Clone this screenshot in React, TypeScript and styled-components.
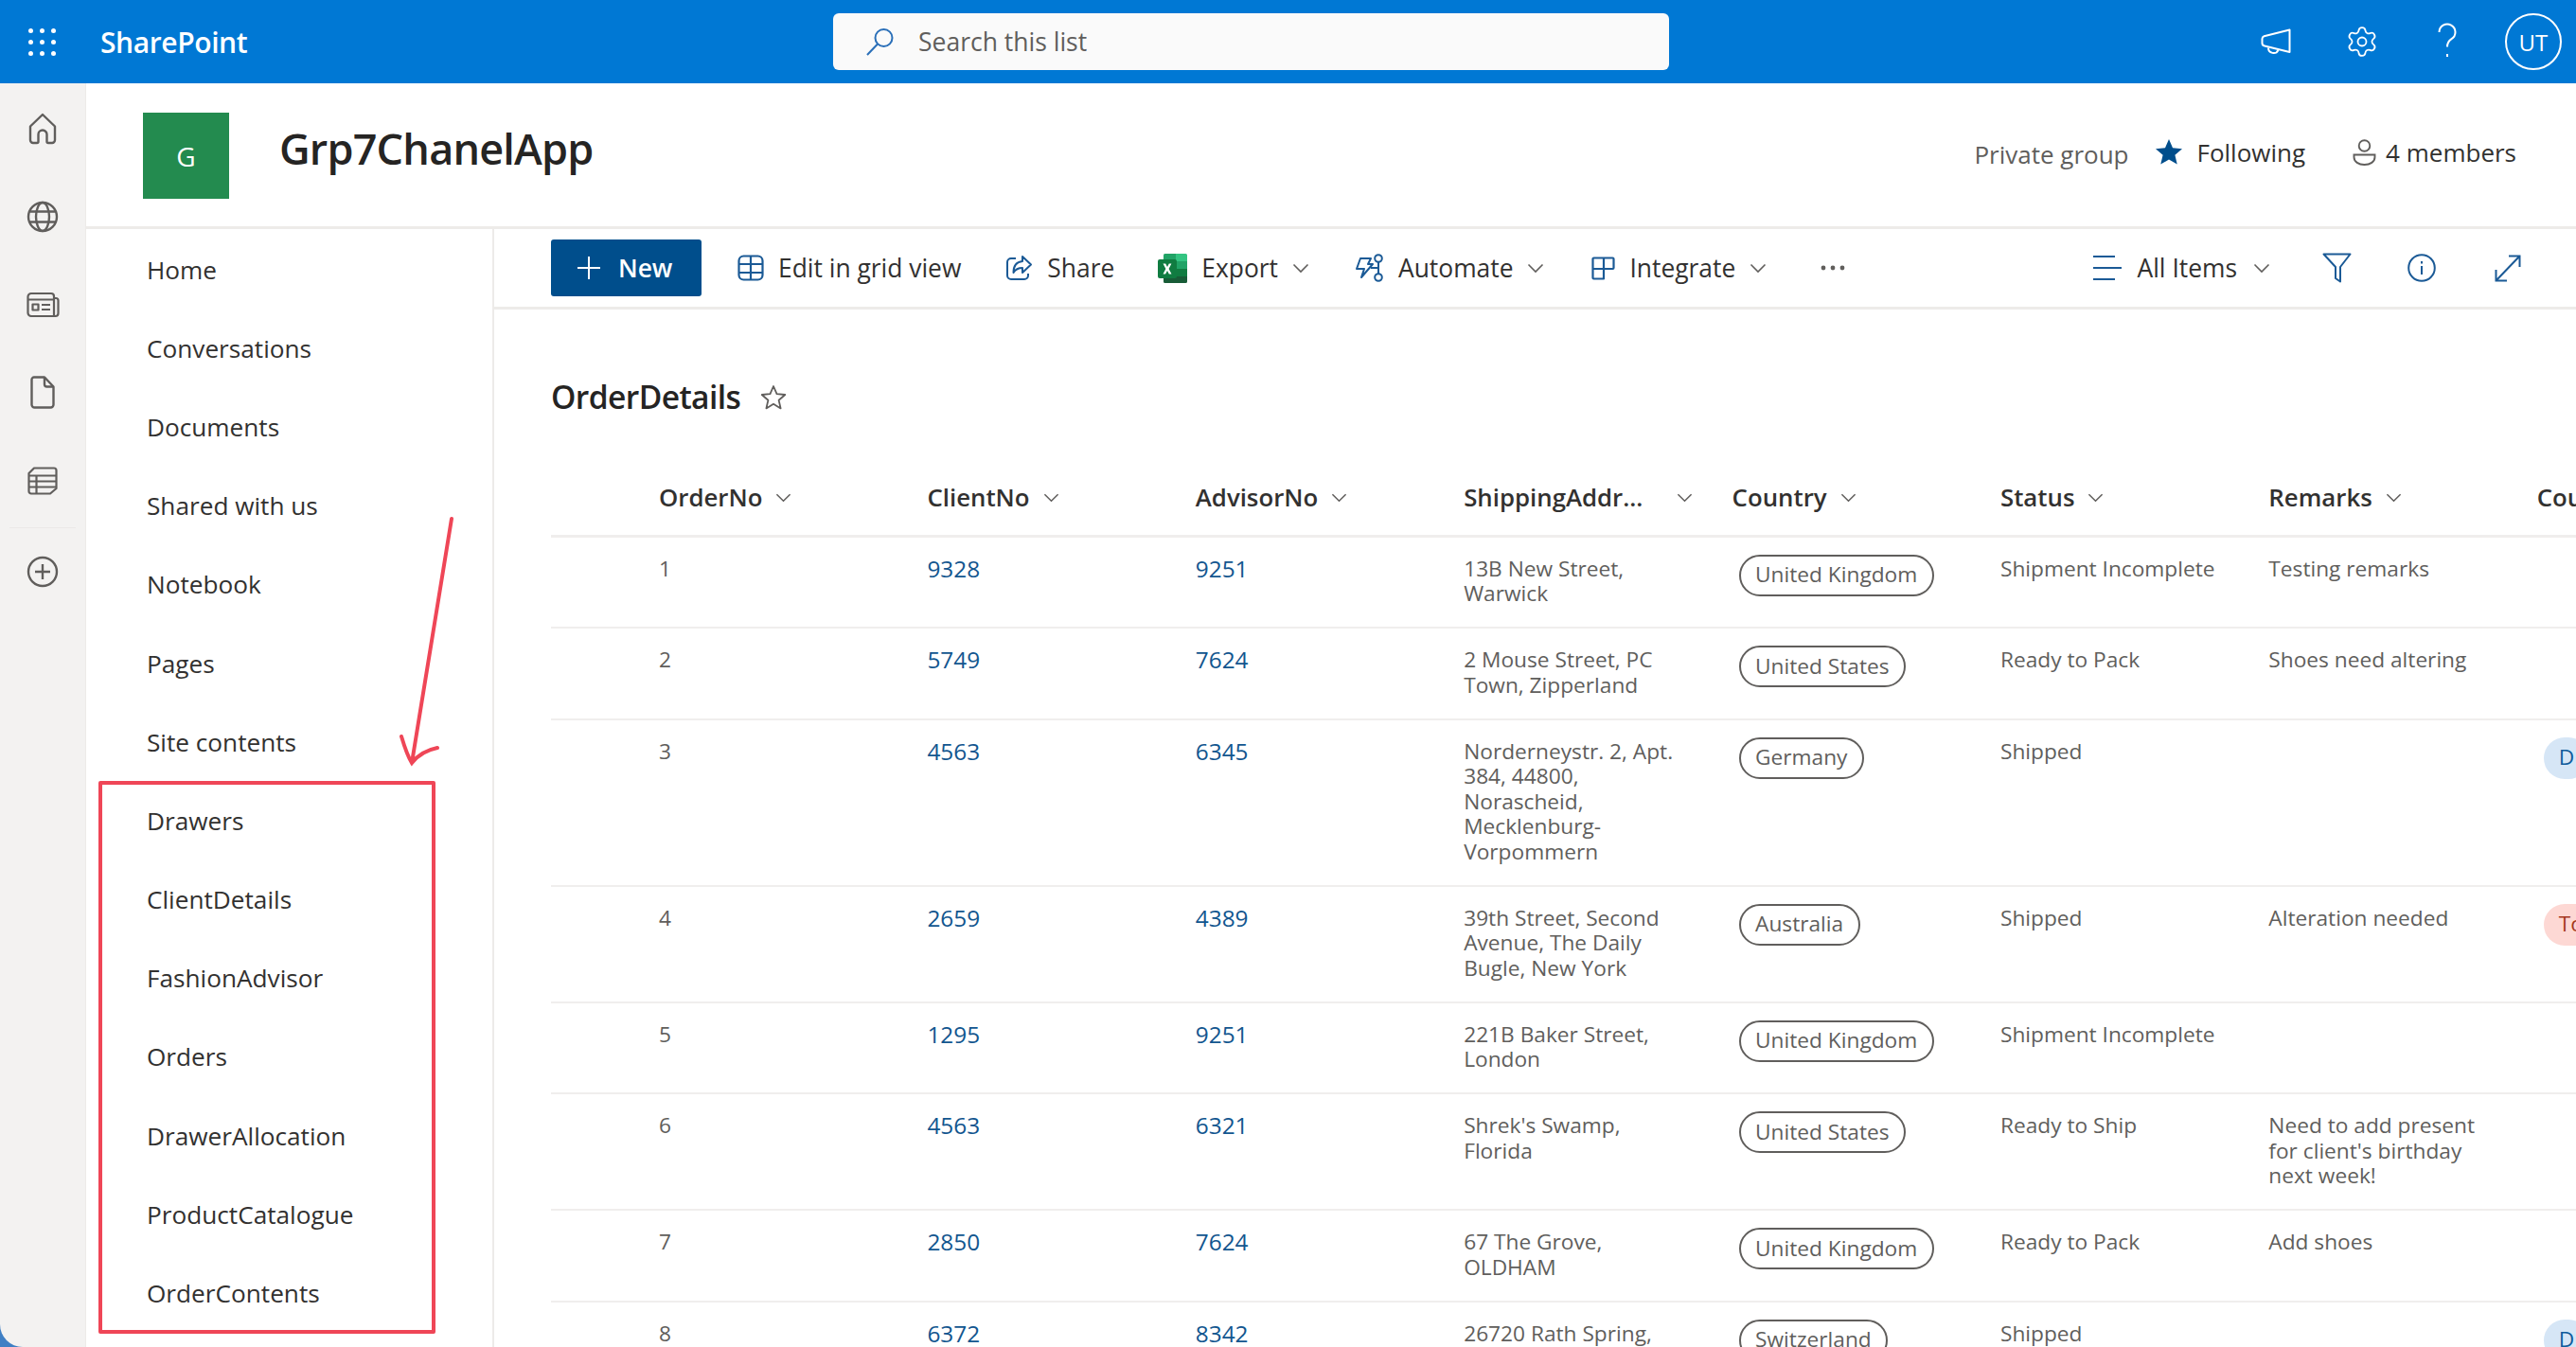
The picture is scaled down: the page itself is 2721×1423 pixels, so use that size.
import React from "react";
import styled, { createGlobalStyle } from "styled-components";
import { Settings } from "lucide-react";

const GlobalStyle = createGlobalStyle`
	html, body {
		margin: 0;
		padding: 0;
		background: #fff;
	}
	body {
		font-family: "Open Sans", "Noto Sans", "Liberation Sans", sans-serif;
		color: #323130;
	}
	* {
		box-sizing: border-box;
	}
`;

const Page = styled.div`
	position: relative;
	width: 2721px;
	height: 1423px;
	overflow: hidden;
	background: #3f7fc4;
`;

const TopBar = styled.header`
	display: flex;
	align-items: center;
	height: 88px;
	background: #0078d4;
	color: #fff;
`;

const Brand = styled.div`
	display: flex;
	align-items: center;
	width: 880px;
`;

const Waffle = styled.div`
	display: grid;
	grid-template-columns: repeat(3, 5px);
	gap: 7px;
	width: 41px;
	margin: 0 35px 0 30px;
	span {
		width: 5px;
		height: 5px;
		border-radius: 50%;
		background: #fff;
	}
`;

const BrandName = styled.span`
	font-size: 30px;
	font-weight: 600;
	letter-spacing: -0.4px;
`;

const SearchBox = styled.div`
	display: flex;
	align-items: center;
	gap: 24px;
	width: 883px;
	height: 60px;
	padding-left: 34px;
	border-radius: 6px;
	background: #fafafa;
	color: #605e5c;
	font-size: 26.5px;
`;

const HeadActions = styled.div`
	display: flex;
	margin-left: auto;
`;

const HeadAction = styled.div`
	display: flex;
	align-items: center;
	justify-content: center;
	width: 90.5px;
	height: 88px;
`;

const Avatar = styled.div`
	display: flex;
	align-items: center;
	justify-content: center;
	width: 60px;
	height: 60px;
	border: 2px solid #fff;
	border-radius: 50%;
	font-size: 24px;
`;

const Body = styled.div`
	display: flex;
	height: 1335px;
`;

const Rail = styled.nav`
	flex: none;
	width: 91px;
	padding-top: 2px;
	background: #f3f2f1;
	border-right: 1px solid #edebe9;
	border-bottom-left-radius: 24px;
`;

const RailButton = styled.div`
	display: flex;
	align-items: center;
	justify-content: center;
	height: 92.8px;
`;

const RailDivider = styled.div`
	height: 1px;
	margin: 3px 10px 0;
	background: #ebe9e7;
`;

const Main = styled.div`
	flex: 1;
	display: flex;
	flex-direction: column;
	min-width: 0;
	background: #fff;
`;

const SiteHeader = styled.div`
	display: flex;
	align-items: center;
	flex: none;
	height: 154px;
	padding: 0 63px 0 60px;
	border-bottom: 3px solid #edebe9;
`;

const SiteLogo = styled.div`
	display: flex;
	align-items: center;
	justify-content: center;
	width: 91px;
	height: 91px;
	margin: 2px 53px 0 0;
	background: #238b4f;
	color: #fff;
	font-size: 28px;
`;

const SiteTitle = styled.h1`
	margin: 0 0 14px;
	font-size: 45px;
	font-weight: 600;
	letter-spacing: -0.8px;
	color: #252423;
`;

const SiteMeta = styled.div`
	display: flex;
	align-items: center;
	margin: 0 0 6px auto;
	font-size: 26px;
`;

const PrivateLabel = styled.span`
	margin: 4px 28px 0 0;
	color: #605e5c;
`;

const MetaItem = styled.span<{ $gap: number; $space?: number }>`
	display: flex;
	align-items: center;
	gap: ${(p) => p.$gap}px;
	margin-right: ${(p) => p.$space || 0}px;
`;

const Columns = styled.div`
	flex: 1;
	display: flex;
	min-height: 0;
`;

const SideNav = styled.nav`
	flex: none;
	width: 431px;
	padding-top: 1px;
	border-right: 2px solid #edebe9;
`;

const NavLink = styled.div`
	display: flex;
	align-items: center;
	height: 83.2px;
	padding-left: 64px;
	font-size: 26.2px;
`;

const Content = styled.main`
	flex: 1;
	min-width: 0;
	overflow: hidden;
`;

const CommandBar = styled.div`
	display: flex;
	align-items: center;
	height: 85px;
	padding: 0 58px 0 60px;
	border-bottom: 3px solid #edebe9;
	font-size: 26.4px;
`;

const NewButton = styled.div`
	display: flex;
	align-items: center;
	gap: 19px;
	width: 159px;
	height: 60px;
	margin-right: 38px;
	padding-left: 28px;
	border-radius: 3px;
	background: #004e8c;
	color: #fff;
	font-weight: 600;
`;

const Command = styled.div<{ $space: number; $gap?: number }>`
	display: flex;
	align-items: center;
	gap: ${(p) => p.$gap ?? 15}px;
	margin-right: ${(p) => p.$space}px;
`;

const Tools = styled.div`
	display: flex;
	align-items: center;
	margin-left: auto;
`;

const ListTitle = styled.div`
	display: flex;
	align-items: center;
	gap: 21px;
	height: 52px;
	margin: 66px 0 39px 60px;
	font-size: 33.6px;
	font-weight: 600;
	letter-spacing: -0.6px;
	color: #252423;
`;

const Table = styled.div`
	width: 2140px;
	margin-left: 60px;
`;

const Row = styled.div<{ $head?: boolean }>`
	display: grid;
	grid-template-columns: 114px repeat(8, 283.4px);
	align-items: start;
	font-size: ${(p) => (p.$head ? 25.8 : 22.7)}px;
	font-weight: ${(p) => (p.$head ? 600 : 400)};
	line-height: 26.5px;
	color: ${(p) => (p.$head ? "#323130" : "#605e5c")};
	border-bottom: ${(p) => (p.$head ? 3 : 2)}px solid #f0eeed;
	padding: ${(p) => (p.$head ? "28px 0 26px" : "20px 0 21.5px")};
`;

const HeadCell = styled.div<{ $gap?: number }>`
	display: flex;
	align-items: center;
	gap: ${(p) => p.$gap ?? 14}px;
	white-space: nowrap;
`;

const Cell = styled.div`
	white-space: pre-line;
`;

const RowLink = styled.span`
	color: #12568f;
	font-size: 24.4px;
`;

const Pill = styled.span`
	display: inline-flex;
	align-items: center;
	height: 44px;
	margin: -2px 0 -5px 7px;
	padding: 0 15.5px;
	border: 2px solid #605e5c;
	border-radius: 22px;
	white-space: nowrap;
`;

const TagPill = styled.span<{ $tone: "blue" | "red" }>`
	display: inline-flex;
	align-items: center;
	height: 44px;
	margin: -2px 0 -5px 7px;
	padding: 0 16px;
	border-radius: 22px;
	white-space: nowrap;
	background: ${(p) => (p.$tone === "blue" ? "#d6e6f6" : "#fdd8d4")};
	color: ${(p) => (p.$tone === "blue" ? "#0f5c9c" : "#a5381f")};
`;

const NoteBox = styled.div`
	position: absolute;
	left: 104px;
	top: 825px;
	width: 356px;
	height: 584px;
	border: 4px solid #ef4657;
	border-radius: 2px;
	pointer-events: none;
`;

const NoteArrow = styled.svg`
	position: absolute;
	left: 410px;
	top: 540px;
	pointer-events: none;
`;

const blue = "#1b5a96";

const Chevron = ({ size = 18, color = "#605e5c" }: { size?: number; color?: string }) => (
	<svg width={size} height={size} viewBox="0 0 18 18" fill="none" stroke={color} strokeWidth="1.6">
		<path d="M1.5 5.5 9 13l7.5-7.5" />
	</svg>
);

const HomeIcon = () => (
	<svg width="32" height="34" viewBox="0 0 32 34" fill="none" stroke="#605e5c" strokeWidth="2.4" strokeLinejoin="round">
		<path d="M3 14.5 16 2l13 12.5V29a3 3 0 0 1-3 3h-4a1.5 1.5 0 0 1-1.5-1.5V23a4.5 4.5 0 0 0-9 0v7.500A1.500 1.500 0 0 1 10 32H6a3 3 0 0 1-3-3Z" />
	</svg>
);

const GlobeIcon = () => (
	<svg width="34" height="34" viewBox="0 0 34 34" fill="none" stroke="#605e5c" strokeWidth="2.4">
		<circle cx="17" cy="17" r="15" />
		<ellipse cx="17" cy="17" rx="7" ry="15" />
		<path d="M3.500 11.500h27M3.500 22.500h27" />
	</svg>
);

const NewsIcon = () => (
	<svg width="35" height="28" viewBox="0 0 35 28" fill="none" stroke="#605e5c" strokeWidth="2.200" strokeLinejoin="round">
		<path d="M5 2h21a3 3 0 0 1 3 3v21H5a3.500 3.500 0 0 1-3.500-3.500V5.500A3.500 3.500 0 0 1 5 2Z" />
		<path d="M29 7h2a2.500 2.500 0 0 1 2.500 2.500V23a3 3 0 0 1-3 3H26" />
		<path d="M2 8.500h27M6.500 13.500h6v6h-6ZM16 14h9M16 19h9" />
	</svg>
);

const FileIcon = () => (
	<svg width="26" height="35" viewBox="0 0 26 35" fill="none" stroke="#605e5c" strokeWidth="2.400" strokeLinejoin="round">
		<path d="M4 1.500h11l9.500 10V30.500a3 3 0 0 1-3 3H4.500a3 3 0 0 1-3-3V4a2.500 2.500 0 0 1 2.500-2.500Z" />
		<path d="M15 1.500V9a2.500 2.500 0 0 0 2.500 2.500h7" />
	</svg>
);

const ListsIcon = () => (
	<svg width="32" height="30" viewBox="0 0 32 30" fill="none" stroke="#605e5c" strokeWidth="2.200" strokeLinejoin="round">
		<path d="M7 1.500h21A2.500 2.500 0 0 1 30.500 4v19L24 28.500H4A2.500 2.500 0 0 1 1.500 26V7Z" />
		<path d="M2 9.500h28M2 15.500h28M2 21.500h28M9.500 9.500v19" />
	</svg>
);

const AddIcon = () => (
	<svg width="34" height="34" viewBox="0 0 34 34" fill="none" stroke="#605e5c" strokeWidth="2.400">
		<circle cx="17" cy="17" r="15" />
		<path d="M17 9v16M9 17h16" />
	</svg>
);

const SearchIcon = () => (
	<svg width="32" height="32" viewBox="0 0 32 32" fill="none" stroke="#2a6fb8" strokeWidth="2">
		<circle cx="19.500" cy="12" r="9" />
		<path d="M13 18.500 2 30" />
	</svg>
);

const MegaphoneIcon = () => (
	<svg width="32" height="28" viewBox="0 0 32 28" fill="none" stroke="#fff" strokeWidth="2" strokeLinejoin="round">
		<path d="M30.500 1.500v23.500L4 18.500a3 3 0 0 1-2.500-3V11a3 3 0 0 1 2-2.800Z" />
		<path d="M8 20.500a5.500 5.500 0 0 0 10.500 2.300" />
	</svg>
);

const StarFilled = () => (
	<svg width="28" height="27" viewBox="0 0 28 27">
		<path d="M14 0l4 9.300 10 .9-7.600 6.600 2.300 9.800L14 21.400l-8.700 5.200 2.300-9.800L0 10.200l10-.9Z" fill="#004e8c" />
	</svg>
);

const StarOutline = () => (
	<svg width="28" height="27" viewBox="0 0 28 27" fill="none" stroke="#605e5c" strokeWidth="1.800" strokeLinejoin="round">
		<path d="M14 2l3.500 8.200 8.800.8-6.700 5.800 2 8.600L14 20.800l-7.600 4.600 2-8.600L1.700 11l8.800-.8Z" />
	</svg>
);

const PersonIcon = () => (
	<svg width="25" height="28" viewBox="0 0 25 28" fill="none" stroke="#605e5c" strokeWidth="1.900">
		<circle cx="12.500" cy="7" r="5.800" />
		<path d="M1.500 16.500h22V19c0 5-5 8-11 8s-11-3-11-8Z" />
	</svg>
);

const PlusIcon = () => (
	<svg width="24" height="24" viewBox="0 0 24 24" fill="none" stroke="#fff" strokeWidth="2">
		<path d="M12 0v24M0 12h24" />
	</svg>
);

const GridIcon = () => (
	<svg width="28" height="28" viewBox="0 0 28 28" fill="none" stroke={blue} strokeWidth="2.200">
		<rect x="1.500" y="1.500" width="25" height="25" rx="5" />
		<path d="M1.500 10h25M1.500 19h25M14 1.500v25" />
	</svg>
);

const ShareIcon = () => (
	<svg width="29" height="28" viewBox="0 0 29 28" fill="none" stroke={blue} strokeWidth="2" strokeLinejoin="round">
		<path d="M11 4H6a4 4 0 0 0-4 4v14a4 4 0 0 0 4 4h14a4 4 0 0 0 4-4v-2" />
		<path d="M18 2l9 8.500-9 8.500v-5c-4 0-7 1-9.500 5 0-7 3.500-11.500 9.500-12Z" />
	</svg>
);

const ExcelIcon = () => (
	<svg width="31" height="31" viewBox="0 0 31 31">
		<path d="M6 1.500a1.500 1.500 0 0 1 1.500-1.500H19v8H6Z" fill="#21a366" />
		<path d="M19 0h10.500A1.500 1.500 0 0 1 31 1.500V8H19Z" fill="#33c481" />
		<path d="M6 8h13v8H6Z" fill="#107c41" />
		<path d="M19 8h12v8H19Z" fill="#21a366" />
		<path d="M6 16h13v8H6Z" fill="#185c37" />
		<path d="M19 16h12v8H19Z" fill="#107c41" />
		<path d="M6 24h25v5.500a1.500 1.500 0 0 1-1.500 1.500h-22A1.500 1.500 0 0 1 6 29.500Z" fill="#185c37" />
		<rect x="0" y="6" width="20" height="20" rx="2" fill="#107c41" />
		<path d="M5.500 10.500h2.700L10 14l1.800-3.500h2.600L11.600 16l2.900 5.500h-2.700l-1.800-3.600-1.900 3.600H5.500L8.400 16Z" fill="#fff" />
	</svg>
);

const AutomateIcon = () => (
	<svg width="31" height="30" viewBox="0 0 31 30" fill="none" stroke={blue} strokeWidth="2" strokeLinejoin="round">
		<path d="M6 5h11l-3 6h5L7 25l3-9H2Z" />
		<circle cx="25" cy="5" r="3.800" />
		<circle cx="25" cy="25" r="3.800" />
		<path d="M25 9v12M17 15h8" />
	</svg>
);

const IntegrateIcon = () => (
	<svg width="25" height="25" viewBox="0 0 25 25" fill="none" stroke={blue} strokeWidth="2.200" strokeLinejoin="round">
		<path d="M2.500 1.500h20a1 1 0 0 1 1 1V12a1 1 0 0 1-1 1H13v10.500H2.500a1 1 0 0 1-1-1V2.500a1 1 0 0 1 1-1Z" />
		<path d="M1.500 13H13M13 1.500V13" />
	</svg>
);

const MoreIcon = () => (
	<svg width="26" height="6" viewBox="0 0 26 6" fill="#605e5c">
		<circle cx="3" cy="3" r="2.400" />
		<circle cx="13" cy="3" r="2.400" />
		<circle cx="23" cy="3" r="2.400" />
	</svg>
);

const ViewsIcon = () => (
	<svg width="30" height="28" viewBox="0 0 30 28" fill="none" stroke={blue} strokeWidth="2">
		<path d="M0 2h23M0 14h30M0 26h23" />
	</svg>
);

const FilterIcon = () => (
	<svg width="31" height="32" viewBox="0 0 31 32" fill="none" stroke={blue} strokeWidth="2" strokeLinejoin="round">
		<path d="M1.500 1.500h28L19 15v15.500l-5-3.500V15Z" />
	</svg>
);

const InfoIcon = () => (
	<svg width="30" height="30" viewBox="0 0 30 30" fill="none" stroke={blue} strokeWidth="2">
		<circle cx="15" cy="15" r="13.800" />
		<path d="M15 13v9M15 8v2.500" />
	</svg>
);

const ExpandIcon = () => (
	<svg width="28" height="29" viewBox="0 0 28 29" fill="none" stroke={blue} strokeWidth="2">
		<path d="M1.500 27.500 26.500 1.500M15 1.500h11.500V13M1.500 16v11.500H13" />
	</svg>
);

const navLinks = [
	"Home",
	"Conversations",
	"Documents",
	"Shared with us",
	"Notebook",
	"Pages",
	"Site contents",
	"Drawers",
	"ClientDetails",
	"FashionAdvisor",
	"Orders",
	"DrawerAllocation",
	"ProductCatalogue",
	"OrderContents",
];

interface Order {
	no: number;
	client: number;
	advisor: number;
	address: string;
	country: string;
	status: string;
	remarks: string;
	tag?: { label: string; tone: "blue" | "red" };
}

const orders: Order[] = [
	{ no: 1, client: 9328, advisor: 9251, address: "13B New Street,\nWarwick", country: "United Kingdom", status: "Shipment Incomplete", remarks: "Testing remarks" },
	{ no: 2, client: 5749, advisor: 7624, address: "2 Mouse Street, PC\nTown, Zipperland", country: "United States", status: "Ready to Pack", remarks: "Shoes need altering" },
	{ no: 3, client: 4563, advisor: 6345, address: "Norderneystr. 2, Apt.\n384, 44800,\nNorascheid,\nMecklenburg-\nVorpommern", country: "Germany", status: "Shipped", remarks: "", tag: { label: "D", tone: "blue" } },
	{ no: 4, client: 2659, advisor: 4389, address: "39th Street, Second\nAvenue, The Daily\nBugle, New York", country: "Australia", status: "Shipped", remarks: "Alteration needed", tag: { label: "To", tone: "red" } },
	{ no: 5, client: 1295, advisor: 9251, address: "221B Baker Street,\nLondon", country: "United Kingdom", status: "Shipment Incomplete", remarks: "" },
	{ no: 6, client: 4563, advisor: 6321, address: "Shrek's Swamp,\nFlorida", country: "United States", status: "Ready to Ship", remarks: "Need to add present\nfor client's birthday\nnext week!" },
	{ no: 7, client: 2850, advisor: 7624, address: "67 The Grove,\nOLDHAM", country: "United Kingdom", status: "Ready to Pack", remarks: "Add shoes" },
	{ no: 8, client: 6372, advisor: 8342, address: "26720 Rath Spring,", country: "Switzerland", status: "Shipped", remarks: "", tag: { label: "D", tone: "blue" } },
];

const headings = ["OrderNo", "ClientNo", "AdvisorNo", "ShippingAddr...", "Country", "Status", "Remarks"];

export default function App() {
	return (
		<Page>
			<GlobalStyle />
			<TopBar>
				<Brand>
					<Waffle>
						{Array.from({ length: 9 }, (_, i) => (
							<span key={i} />
						))}
					</Waffle>
					<BrandName>SharePoint</BrandName>
				</Brand>
				<SearchBox>
					<SearchIcon />
					Search this list
				</SearchBox>
				<HeadActions>
					<HeadAction>
						<MegaphoneIcon />
					</HeadAction>
					<HeadAction>
						<Settings size={36} strokeWidth={1.2} />
					</HeadAction>
					<HeadAction>
						<svg width="20" height="40" viewBox="0 0 20 40" fill="none" stroke="#fff" strokeWidth="2">
							<path d="M1.500 10a8.500 8.500 0 1 1 13 7.200c-3 2-4.500 3.800-4.500 8.300M10 33v3" />
						</svg>
					</HeadAction>
					<HeadAction>
						<Avatar>UT</Avatar>
					</HeadAction>
				</HeadActions>
			</TopBar>
			<Body>
				<Rail>
					<RailButton><HomeIcon /></RailButton>
					<RailButton><GlobeIcon /></RailButton>
					<RailButton><NewsIcon /></RailButton>
					<RailButton><FileIcon /></RailButton>
					<RailButton><ListsIcon /></RailButton>
					<RailDivider />
					<RailButton><AddIcon /></RailButton>
				</Rail>
				<Main>
					<SiteHeader>
						<SiteLogo>G</SiteLogo>
						<SiteTitle>Grp7ChanelApp</SiteTitle>
						<SiteMeta>
							<PrivateLabel>Private group</PrivateLabel>
							<MetaItem $gap={16} $space={50}>
								<StarFilled />
								Following
							</MetaItem>
							<MetaItem $gap={10}>
								<PersonIcon />
								4 members
							</MetaItem>
						</SiteMeta>
					</SiteHeader>
					<Columns>
						<SideNav>
							{navLinks.map((link) => (
								<NavLink key={link}>{link}</NavLink>
							))}
						</SideNav>
						<Content>
							<CommandBar>
								<NewButton>
									<PlusIcon />
									New
								</NewButton>
								<Command $space={47}>
									<GridIcon />
									Edit in grid view
								</Command>
								<Command $space={46}>
									<ShareIcon />
									Share
								</Command>
								<Command $space={48}>
									<ExcelIcon />
									Export
									<Chevron />
								</Command>
								<Command $space={50}>
									<AutomateIcon />
									Automate
									<Chevron />
								</Command>
								<Command $space={57}>
									<IntegrateIcon />
									Integrate
									<Chevron />
								</Command>
								<MoreIcon />
								<Tools>
									<Command $space={55} $gap={17}>
										<ViewsIcon />
										All Items
										<Chevron />
									</Command>
									<Command $space={59}>
										<FilterIcon />
									</Command>
									<Command $space={62}>
										<InfoIcon />
									</Command>
									<ExpandIcon />
								</Tools>
							</CommandBar>
							<ListTitle>
								OrderDetails
								<StarOutline />
							</ListTitle>
							<Table>
								<Row $head>
									<span />
									{headings.map((h) => (
										<HeadCell key={h} $gap={h === "ShippingAddr..." ? 36 : 14}>
											{h}
											<Chevron size={17} />
										</HeadCell>
									))}
									<HeadCell>Cou</HeadCell>
								</Row>
								{orders.map((o) => (
									<Row key={o.no}>
										<span />
										<Cell>{o.no}</Cell>
										<Cell><RowLink>{o.client}</RowLink></Cell>
										<Cell><RowLink>{o.advisor}</RowLink></Cell>
										<Cell>{o.address}</Cell>
										<Cell><Pill>{o.country}</Pill></Cell>
										<Cell>{o.status}</Cell>
										<Cell>{o.remarks}</Cell>
										<Cell>{o.tag && <TagPill $tone={o.tag.tone}>{o.tag.label}</TagPill>}</Cell>
									</Row>
								))}
							</Table>
						</Content>
					</Columns>
				</Main>
			</Body>
			<NoteBox />
			<NoteArrow width="70" height="280" viewBox="0 0 70 280" fill="none" stroke="#ef4657" strokeWidth="4" strokeLinecap="round">
				<path d="M67 8 25 266M14 238c3 10 6 20 11 28 7-9 17-14 27-16" />
			</NoteArrow>
		</Page>
	);
}
